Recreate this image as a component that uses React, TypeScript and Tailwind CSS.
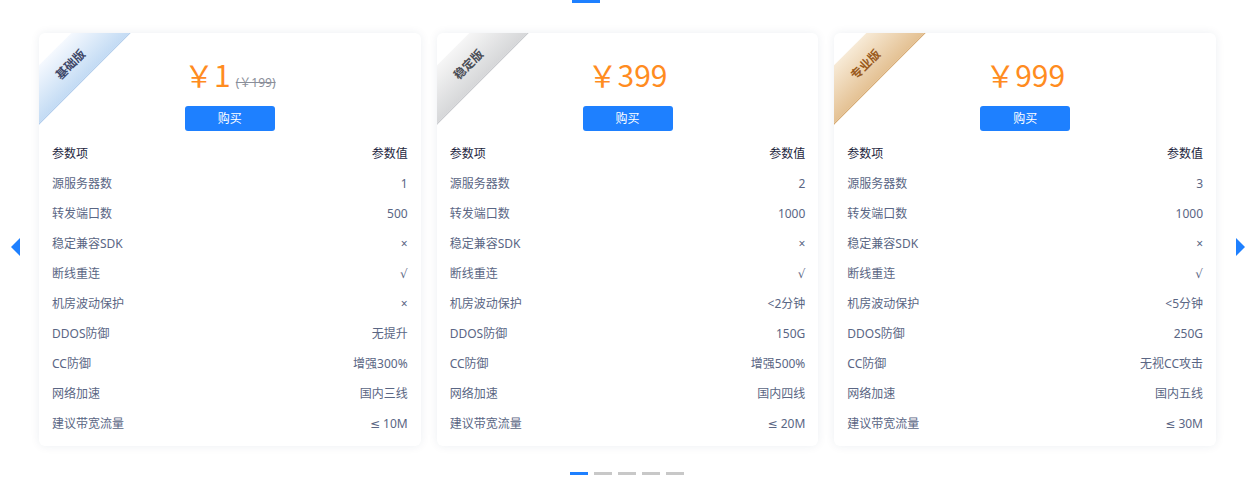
import React from "react";

type Plan = {
  tag: string;
  ribbon: string;
  ribbonText: string;
  price: string;
  old?: string;
  values: string[];
};

const labels = [
  "源服务器数",
  "转发端口数",
  "稳定兼容SDK",
  "断线重连",
  "机房波动保护",
  "DDOS防御",
  "CC防御",
  "网络加速",
  "建议带宽流量",
];

const plans: Plan[] = [
  {
    tag: "基础版",
    ribbon: "bg-[linear-gradient(to_bottom,#f5f9fe,#c3dbf4)] border-b border-[#aecaeb]",
    ribbonText: "text-[#3f4868]",
    price: "1",
    old: "(￥199)",
    values: ["1", "500", "×", "√", "×", "无提升", "增强300%", "国内三线", "≤ 10M"],
  },
  {
    tag: "稳定版",
    ribbon: "bg-[linear-gradient(to_bottom,#f6f6f6,#d6d7d9)] border-b border-[#c5c7cb]",
    ribbonText: "text-[#4a4d55]",
    price: "399",
    values: ["2", "1000", "×", "√", "<2分钟", "150G", "增强500%", "国内四线", "≤ 20M"],
  },
  {
    tag: "专业版",
    ribbon: "bg-[linear-gradient(to_bottom,#f7ead6,#e4c193)] border-b border-[#d5a66b]",
    ribbonText: "text-[#9a5a1c]",
    price: "999",
    values: ["3", "1000", "×", "√", "<5分钟", "250G", "无视CC攻击", "国内五线", "≤ 30M"],
  },
];

function Card({ plan }: { plan: Plan }) {
  return (
    <div className="relative flex-1 overflow-hidden rounded-[6px] bg-white shadow-[0_0_10px_rgba(30,50,90,0.08)] pt-[26px] pb-[7px]">
      <div
        className={`absolute left-[-49px] top-[10px] flex h-[42px] w-[160px] -rotate-45 items-center justify-center ${plan.ribbon}`}
      >
        <span
          className={`text-[12px] font-bold leading-none ${plan.ribbonText}`}
          style={{ fontFamily: '"Noto Sans CJK SC", sans-serif' }}
        >
          {plan.tag}
        </span>
      </div>
      <div className="flex h-[30px] items-baseline justify-center">
        <span
          className="text-[30px] leading-[30px] text-[#ff8c1f]"
          style={{ fontFamily: '"Noto Sans CJK SC", sans-serif' }}
        >
          ￥{plan.price}
        </span>
        {plan.old && (
          <span className="ml-[5px] text-[12px] text-[#8a8e99] line-through">{plan.old}</span>
        )}
      </div>
      <div className="mt-[17px] flex justify-center">
        <button className="h-[25px] w-[90px] rounded-[3px] bg-[#1e80ff] text-[12px] text-white">
          购买
        </button>
      </div>
      <div className="mt-[8px] px-[13px]">
        <div className="flex h-[30px] items-center justify-between text-[12px] text-[#1d2640]">
          <span>参数项</span>
          <span>参数值</span>
        </div>
        {labels.map((l, i) => (
          <div
            key={l}
            className="flex h-[30px] items-center justify-between text-[12px] text-[#5a6684]"
          >
            <span>{l}</span>
            <span>{plan.values[i]}</span>
          </div>
        ))}
      </div>
    </div>
  );
}

export default function App() {
  return (
    <div
      className="relative h-[498px] w-[1259px] bg-white"
      style={{ fontFamily: '"Noto Sans", "DejaVu Sans", "Noto Sans CJK SC", sans-serif' }}
    >
      <div className="flex h-[3px]">
        <div className="ml-[572px] h-[3px] w-[28px] bg-[#1e80ff]" />
      </div>
      <div className="mt-[30px] flex">
        <div className="flex w-[39px] items-center pl-[11px] pt-[14px]">
          <svg width="9" height="18" viewBox="0 0 9 18">
            <polygon points="9,0 9,18 0,9" fill="#1e80ff" />
          </svg>
        </div>
        <div className="flex w-[1177px] gap-[16px]">
          {plans.map((p) => (
            <Card key={p.tag} plan={p} />
          ))}
        </div>
        <div className="flex w-[43px] items-center pl-[20px] pt-[14px]">
          <svg width="9" height="18" viewBox="0 0 9 18">
            <polygon points="0,0 9,9 0,18" fill="#1e80ff" />
          </svg>
        </div>
      </div>
      <div className="mt-[26px] flex gap-[6px] pl-[570px]">
        <div className="h-[3px] w-[18px] bg-[#1e80ff]" />
        <div className="h-[3px] w-[18px] bg-[#c8c8c8]" />
        <div className="h-[3px] w-[18px] bg-[#c8c8c8]" />
        <div className="h-[3px] w-[18px] bg-[#c8c8c8]" />
        <div className="h-[3px] w-[18px] bg-[#c8c8c8]" />
      </div>
    </div>
  );
}
